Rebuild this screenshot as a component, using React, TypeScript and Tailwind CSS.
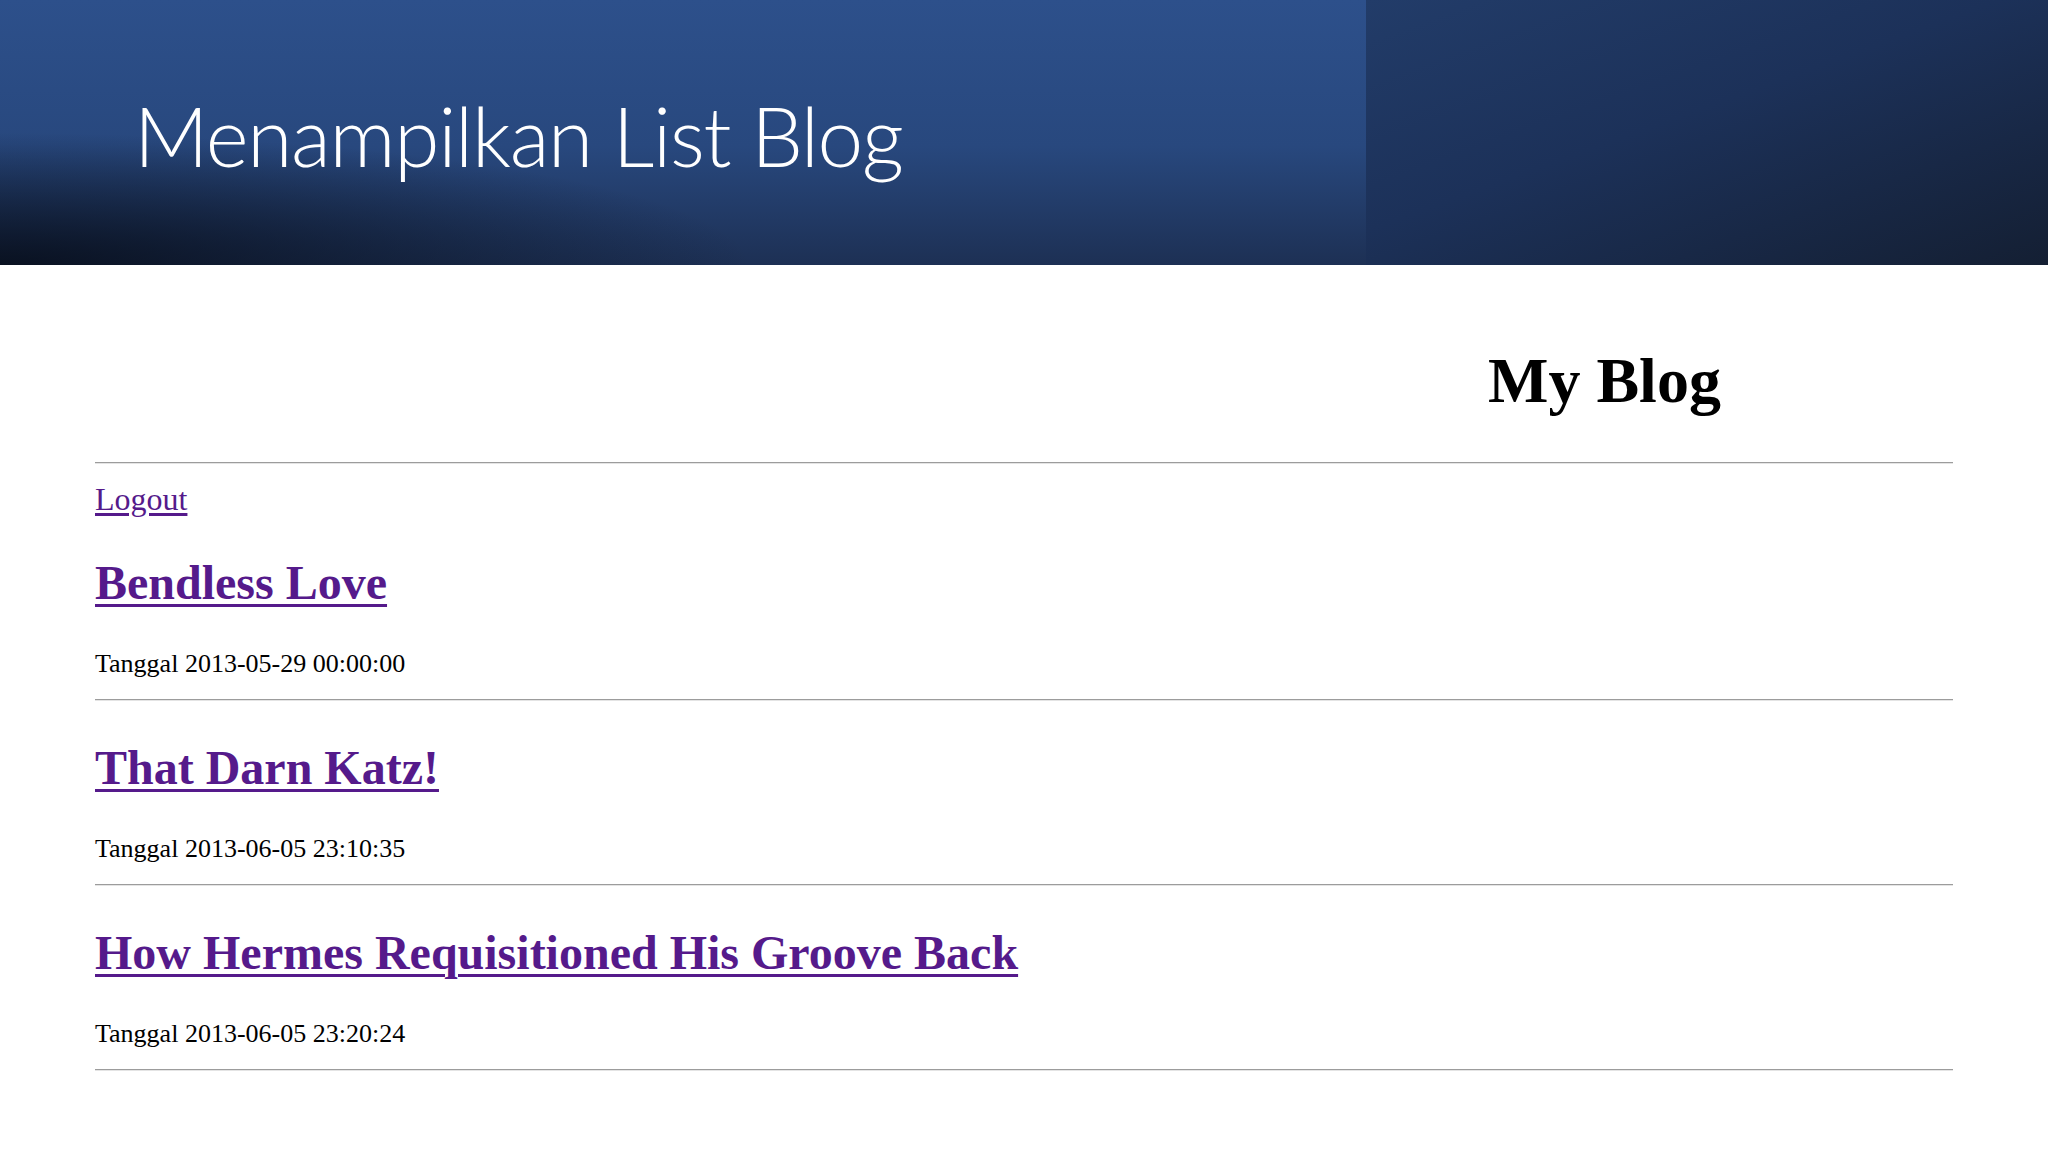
import * as React from 'react';

type Post = {
  title: string;
  date: string;
};

const posts: Post[] = [
  { title: 'Bendless Love', date: '2013-05-29 00:00:00' },
  { title: 'That Darn Katz!', date: '2013-06-05 23:10:35' },
  { title: 'How Hermes Requisitioned His Groove Back', date: '2013-06-05 23:20:24' }
];

function Rule(): React.ReactElement {
  return <div className="h-[2px] border-t border-b border-t-[#9c9c9c] border-b-[#e4e4e4]" />;
}

function SlideHeader(): React.ReactElement {
  return (
    <header className="flex h-[265px] w-full">
      <div className="flex-1 flex items-start pl-[134px] pt-[85px] bg-[radial-gradient(ellipse_55%_50%_at_0%_100%,rgba(6,12,24,0.85),rgba(6,12,24,0)),linear-gradient(to_bottom,#2d508b,#28487e_55%,#1d3054)]">
        <h1 className="font-['Lato','Open_Sans',sans-serif] font-light text-[82px] leading-[100px] text-white tracking-[-1.3px] whitespace-nowrap">
          Menampilkan List Blog
        </h1>
      </div>
      <div className="w-[682px] bg-[linear-gradient(160deg,#223c69,#1c3159_45%,#141f33)]" />
    </header>
  );
}

function PostItem({ post }: { post: Post }): React.ReactElement {
  return (
    <article className="flex flex-col">
      <h2 className="mt-[43px] text-[48px] leading-[48px] font-bold">
        <a href="#" className="text-[#551a8b] underline decoration-[3px] underline-offset-[5px]">
          {post.title}
        </a>
      </h2>
      <p className="mt-[44px] text-[26px] leading-[26px] text-black">Tanggal {post.date}</p>
      <div className="mt-[22px]">
        <Rule />
      </div>
    </article>
  );
}

export default function App(): React.ReactElement {
  return (
    <div className="min-h-[1152px] w-full bg-white">
      <SlideHeader />
      <main className="px-[95px] font-['Liberation_Serif','Times_New_Roman',serif] text-black">
        <h1 className="pt-[84px] pl-[1393px] text-[64px] leading-[64px] font-bold whitespace-nowrap">My Blog</h1>
        <div className="mt-[49px]">
          <Rule />
        </div>
        <div className="mt-[19px] text-[32px] leading-[32px]">
          <a href="#" className="text-[#551a8b] underline underline-offset-[3px]">
            Logout
          </a>
        </div>
        <div className="mt-[1px]">
          {posts.map(post => (
            <PostItem key={post.title} post={post} />
          ))}
        </div>
      </main>
    </div>
  );
}
